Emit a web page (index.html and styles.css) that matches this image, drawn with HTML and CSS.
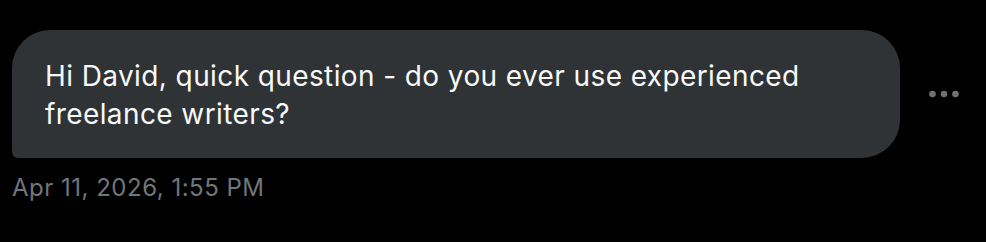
FILE: index.html
```html
<!DOCTYPE html>
<html>
<head>
<meta charset="utf-8">
<link rel="stylesheet" href="styles.css">
</head>
<body>
<div class="thread">
  <div class="row">
    <div class="bubble">Hi David, quick question - do you ever use experienced freelance writers?</div>
    <button class="more" aria-label="More">
      <svg width="30" height="8" viewBox="0 0 30 8"><circle cx="3.5" cy="4" r="3.3"/><circle cx="15" cy="4" r="3.3"/><circle cx="26.5" cy="4" r="3.3"/></svg>
    </button>
  </div>
  <div class="time">Apr 11, 2026, 1:55 PM</div>
</div>
</body>
</html>
```
FILE: styles.css
```css
html, body {
  margin: 0;
  background: #000;
}
body {
  font-family: Inter, "Liberation Sans", Arial, sans-serif;
}
.thread {
  padding: 30px 0 0 12px;
}
.row {
  display: flex;
  align-items: center;
}
.bubble {
  box-sizing: border-box;
  width: 888px;
  height: 128px;
  background: #2f3336;
  color: #f7f9f9;
  border-radius: 38px 38px 38px 6px;
  padding: 28px 33px 0;
  font-size: 28px;
  line-height: 37.5px;
  letter-spacing: 0.4px;
}
.more {
  background: none;
  border: 0;
  padding: 0;
  margin-left: 29px;
  display: flex;
  fill: #6e7073;
}
.time {
  margin-top: 16px;
  color: #71767b;
  font-size: 24px;
  line-height: 28px;
  letter-spacing: 0.5px;
}
```
